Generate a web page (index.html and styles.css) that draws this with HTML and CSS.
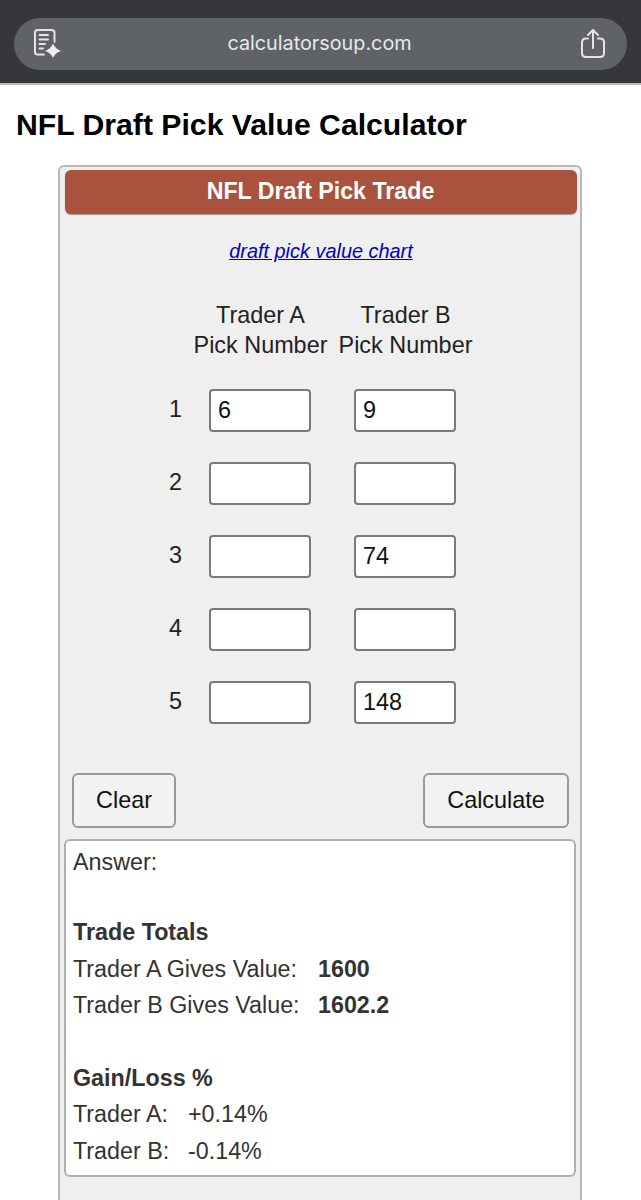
FILE: index.html
```html
<!DOCTYPE html>
<html lang="en">
<head>
    <meta charset="UTF-8">
    <meta name="viewport" content="width=device-width, initial-scale=1.0">
    <title>NFL Draft Pick Value Calculator</title>
    <link rel="stylesheet" href="styles.css">
</head>
<body>
    <!-- Browser address bar -->
    <div class="topbar">
        <div class="pill">
            <svg class="icon-reader" width="32" height="34" viewBox="0 0 32 34" fill="none" stroke="#e4e5e6" stroke-width="2" stroke-linecap="round">
                <path d="M12 27.500H5.500Q3 27.500 3 25V5.500Q3 3 5.500 3H19.500Q22.500 3 22.500 5.500V15"/>
                <path d="M7.500 8H16M7.500 12.500H16M7.500 17H13M7.500 21.500H11"/>
                <path d="M21 14.500Q22 22 31 24Q22 25.500 21 33.500Q20 25.500 11 24Q20 22 21 14.500Z" fill="#eceded" stroke="#5f6266" stroke-width="1"/>
            </svg>
            <span class="url">calculatorsoup.com</span>
            <svg class="icon-share" width="26" height="32" viewBox="0 0 26 32" fill="none" stroke="#e4e5e6" stroke-width="2" stroke-linecap="round" stroke-linejoin="round">
                <path d="M8 10.500H6Q2 10.500 2 14.500V25Q2 29 6 29H20Q24 29 24 25V14.500Q24 10.500 20 10.500H18"/>
                <path d="M13 20V2M8 7L13 2L18 7"/>
            </svg>
        </div>
    </div>

    <h1>NFL Draft Pick Value Calculator</h1>

    <div class="panel">
        <div class="panel-title">NFL Draft Pick Trade</div>
        <p class="chart-link"><a href="#">draft pick value chart</a></p>

        <div class="pick-head">
            <div>Trader A<br>Pick Number</div>
            <div>Trader B<br>Pick Number</div>
        </div>

        <div class="pick-row">
            <span class="pick-num">1</span>
            <input class="pick-input" type="text" value="6">
            <input class="pick-input" type="text" value="9">
        </div>
        <div class="pick-row">
            <span class="pick-num">2</span>
            <input class="pick-input" type="text">
            <input class="pick-input" type="text">
        </div>
        <div class="pick-row">
            <span class="pick-num">3</span>
            <input class="pick-input" type="text">
            <input class="pick-input" type="text" value="74">
        </div>
        <div class="pick-row">
            <span class="pick-num">4</span>
            <input class="pick-input" type="text">
            <input class="pick-input" type="text">
        </div>
        <div class="pick-row">
            <span class="pick-num">5</span>
            <input class="pick-input" type="text">
            <input class="pick-input" type="text" value="148">
        </div>

        <div class="actions">
            <button class="btn btn-clear" type="button">Clear</button>
            <button class="btn btn-calc" type="button">Calculate</button>
        </div>

        <div class="answer">
            <div class="answer-label">Answer:</div>
            <div class="line heading">Trade Totals</div>
            <div class="line"><span class="key-long">Trader A Gives Value:</span><b>1600</b></div>
            <div class="line"><span class="key-long">Trader B Gives Value:</span><b>1602.2</b></div>
            <div class="line heading gap">Gain/Loss %</div>
            <div class="line"><span class="key-short">Trader A:</span>+0.14%</div>
            <div class="line"><span class="key-short">Trader B:</span>-0.14%</div>
        </div>
    </div>
</body>
</html>
```

FILE: styles.css
```css
html, body {
    height: 1200px;
    overflow: hidden;
}

body {
    margin: 0;
    background-color: #ffffff;
    color: #000000;
    font-family: 'Liberation Sans', Arial, sans-serif;
}

.topbar {
    height: 85px;
    padding: 18px 14px 0;
    box-sizing: border-box;
    background-color: #36373a;
    border-bottom: 2px solid #b9b9b9;
}

.pill {
    height: 52px;
    padding: 0 21px 0 18px;
    display: flex;
    align-items: center;
    justify-content: space-between;
    background-color: #5f6266;
    border-radius: 26px;
}

.url {
    margin: -2px 5px 0 0;
    color: #e8e9ea;
    font-family: 'Inter', 'Liberation Sans', sans-serif;
    font-size: 19.800px;
}

h1 {
    margin: 23px 0 23px 16px;
    font-size: 30.200px;
    line-height: 34px;
    font-weight: bold;
}

.panel {
    width: 524px;
    height: 1100px;
    margin-left: 58px;
    padding: 3px 4px;
    box-sizing: border-box;
    background-color: #efefef;
    border: 2px solid #b8b8b8;
    border-radius: 6px;
}

.panel-title {
    height: 44px;
    width: 512px;
    margin-left: 1px;
    padding-right: 1px;
    box-sizing: border-box;
    line-height: 43px;
    text-align: center;
    color: #ffffff;
    font-size: 23.200px;
    font-weight: bold;
    background-color: #a9533e;
    border-radius: 6px;
    box-shadow: 0 1px 1px #999999;
}

.chart-link {
    margin: 25px 0 0;
    width: 514px;
    text-align: center;
    font-size: 19.900px;
    line-height: 24px;
    font-style: italic;
}

.chart-link a {
    color: #0000cc;
}

.pick-head {
    display: flex;
    margin: 37px 0 0 124px;
    font-size: 23.400px;
    line-height: 30px;
    color: #222222;
    text-align: center;
}

.pick-head div {
    width: 145px;
}

.pick-row {
    display: flex;
    align-items: center;
    height: 44px;
    margin-top: 29px;
    margin-left: 99px;
    font-size: 23.400px;
    color: #222222;
}

.pick-head + .pick-row {
    margin-top: 28px;
}

.pick-num {
    width: 46px;
    padding: 0 21px 2px 0;
    box-sizing: border-box;
    text-align: center;
}

.pick-input {
    width: 102px;
    height: 43px;
    margin-right: 43px;
    padding: 0 7px;
    box-sizing: border-box;
    border: 2px solid #7a7a7a;
    border-radius: 4px;
    background-color: #ffffff;
    color: #111111;
    font-family: 'Liberation Sans', Arial, sans-serif;
    font-size: 23.400px;
}

.actions {
    display: flex;
    justify-content: space-between;
    width: 497px;
    margin: 49px 0 11px 8px;
}

.btn {
    height: 55px;
    box-sizing: border-box;
    padding: 0;
    background-color: #f2f2f2;
    border: 2px solid #999999;
    border-radius: 6px;
    color: #111111;
    font-family: 'Liberation Sans', Arial, sans-serif;
    font-size: 23.400px;
}

.btn-clear {
    width: 104px;
}

.btn-calc {
    width: 146px;
}

.answer {
    width: 512px;
    height: 338px;
    padding: 7px 7px;
    box-sizing: border-box;
    background-color: #ffffff;
    border: 2px solid #b0b0b0;
    border-radius: 6px;
    color: #333333;
    font-size: 23.300px;
}

.answer-label {
    line-height: 28px;
    margin-bottom: 38px;
}

.line {
    height: 36.500px;
    line-height: 36.500px;
}

.heading {
    font-weight: bold;
}

.gap {
    margin-top: 36px;
}

.key-long {
    display: inline-block;
    width: 245px;
}

.key-short {
    display: inline-block;
    width: 115px;
}
```
